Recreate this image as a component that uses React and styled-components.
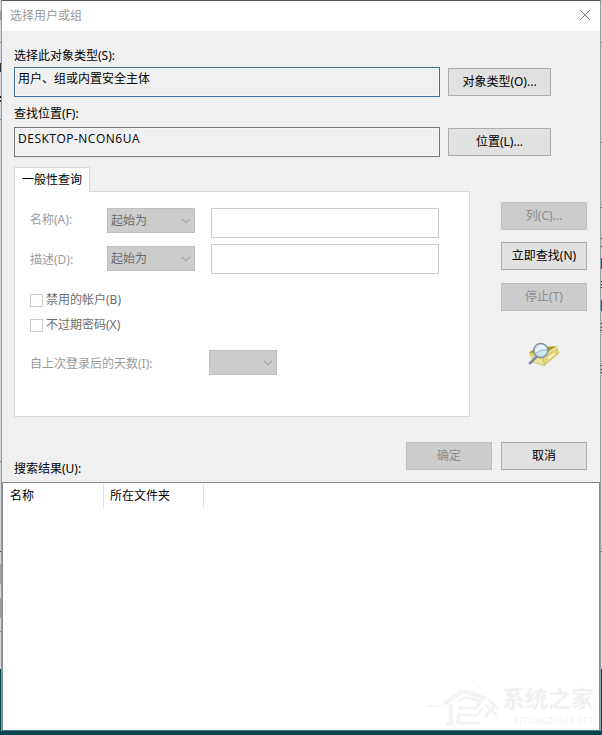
import React from 'react'
import styled, { createGlobalStyle } from 'styled-components'

const GlobalStyle = createGlobalStyle`
    * {
        box-sizing: border-box;
    }

    body {
        margin: 0;
        font-family: "Noto Sans", "Noto Sans CJK SC", sans-serif;
        font-size: 12px;
        line-height: 16px;
        color: #000;
        overflow: hidden;
    }

    button, input {
        font: inherit;
    }
`;

// bits of the window behind that stick out on either side
const leftMarks = [
    { top: 11, height: 9, color: '#999' },
    { top: 42, height: 1, color: '#888' },
    { top: 63, height: 9, color: '#333' },
    { top: 96, height: 2, color: '#111' },
    { top: 100, height: 2, color: '#333' },
    { top: 119, height: 1, color: '#888' },
    { top: 461, height: 1, color: '#777' },
    { top: 551, height: 1, color: '#444' },
    { top: 564, height: 20, color: '#a2a4a4' },
    { top: 598, height: 20, color: '#999' },
    { top: 631, height: 1, color: '#888' },
]

const rightMarks = [
    { top: 42, height: 1, color: '#777' },
    { top: 142, height: 1, color: '#777' },
    { top: 207, height: 1, color: '#555' },
    { top: 238, height: 1, color: '#111' },
    { top: 246, height: 1, color: '#111' },
    { top: 258, height: 11, color: '#1c5378' },
    { top: 281, height: 1, color: '#111' },
    { top: 284, height: 1, color: '#111' },
    { top: 287, height: 1, color: '#111' },
    { top: 300, height: 11, color: '#1c5378' },
    { top: 323, height: 1, color: '#111' },
    { top: 327, height: 1, color: '#111' },
    { top: 330, height: 1, color: '#111' },
    { top: 365, height: 1, color: '#111' },
    { top: 369, height: 1, color: '#111' },
    { top: 372, height: 1, color: '#111' },
    { top: 551, height: 1, color: '#555' },
]

function Chevron() {
    return (
        <svg width="10" height="6" viewBox="0 0 10 6" fill="none" stroke="#a0a0a0" strokeWidth="1.1">
            <path d="M1 0.8 L5 4.8 L9 0.8" />
        </svg>
    )
}

function SearchIcon() {
    return (
        <svg width="32" height="26" viewBox="0 0 32 26">
            <path d="M1 11 L8 5 L29 4 L30 8 L16 18 L3 16 Z" fill="#dccf72" />
            <path d="M1 10.500 L9 5.500 L28 4.500 L16 12 Z" fill="#a6953a" />
            <path d="M14 14.500 L29.500 4 L31 10.500 L16.500 23.500 L4 19.500 L3 14 Z" fill="#efe69a" />
            <path d="M15 15.500 L29 7 L31 11 L16.500 23.500 Z" fill="#e2d77c" stroke="#b5aa5c" strokeWidth="0.6" />
            <path d="M19.500 15.500 L26 11 L26.500 12.500 L20 17.500 Z" fill="#fbf8cf" />
            <path d="M4 15.500 L15 16.500 L16.500 23.500 L4 20" fill="#ece39a" stroke="#c0b565" strokeWidth="0.6" />
            <path d="M8 15 L2 21" stroke="#747d95" strokeWidth="2.8" strokeLinecap="round" />
            <path d="M7.500 14.500 L1.800 20.300" stroke="#b4bbcb" strokeWidth="1" strokeLinecap="round" />
            <ellipse cx="12.800" cy="8.500" rx="7" ry="7" fill="#cbe5ee" stroke="#8793a8" strokeWidth="1.5" />
            <path d="M7.500 10.500 Q12 6 18.500 7 Q17 3 12.500 3 Q7.500 5 7.500 10.500 Z" fill="#e8f7fa" />
            <path d="M7.500 11.500 Q13 7 19 8" fill="none" stroke="#9fc5b0" strokeWidth="1" />
        </svg>
    )
}

function Watermark() {
    return (
        <WatermarkStyled>
            <svg width="72" height="48" viewBox="0 0 72 48" fill="none" stroke="#f3f3f3" strokeWidth="4">
                <path d="M0 26 L12 26" strokeWidth="2" />
                <path d="M17 24 L36 11 L59 18" />
                <path d="M46 2 L59 14" strokeWidth="1" />
                <path d="M24 24 V44 H19" />
                <path d="M31 21 L39 17 L54 21 L49 28 H31 M31 35 H50 L56 28 M31 35 V43 H53" strokeWidth="3" />
                <path d="M61 19 L71 29 M58 24 L70 36 M69 24 L58 37" strokeWidth="3" />
            </svg>
            <div>
                <div className="name">系统之家</div>
                <div className="site">XITONGZHIJIA.NET</div>
            </div>
        </WatermarkStyled>
    )
}

function App() {
    return (
        <Desktop>
            <GlobalStyle />
            {leftMarks.map((mark) => <Mark key={mark.top} $side="left" style={{ top: mark.top, height: mark.height, background: mark.color }} />)}
            {rightMarks.map((mark) => <Mark key={mark.top} $side="right" style={{ top: mark.top, height: mark.height, background: mark.color }} />)}
            <Dialog>
                <TitleBar>
                    <span>选择用户或组</span>
                    <svg width="12" height="12" viewBox="0 0 12 12" stroke="#858585" strokeWidth="1">
                        <path d="M1 1 L11 11 M11 1 L1 11" />
                    </svg>
                </TitleBar>

                <Body>
                    <FieldLabel>选择此对象类型(S):</FieldLabel>
                    <FieldRow>
                        <ReadOnly $color="#3f6f98">用户、组或内置安全主体</ReadOnly>
                        <Button $width={103}>对象类型(O)...</Button>
                    </FieldRow>
                    <FieldLabel $gap={9}>查找位置(F):</FieldLabel>
                    <FieldRow>
                        <ReadOnly $color="#767676"><Latin>DESKTOP-NCON6UA</Latin></ReadOnly>
                        <Button $width={103}>位置(L)...</Button>
                    </FieldRow>

                    <Query>
                        <div>
                            <Tab>一般性查询</Tab>
                            <Panel>
                                <Criteria>
                                    <Muted>名称(A):</Muted>
                                    <Select $width={88}>起始为<Chevron /></Select>
                                    <TextInput disabled />
                                </Criteria>
                                <Criteria $offset={2}>
                                    <Muted>描述(D):</Muted>
                                    <Select $width={88}>起始为<Chevron /></Select>
                                    <TextInput disabled />
                                </Criteria>
                                <Checks>
                                    <Check><span className="box" />禁用的帐户(B)</Check>
                                    <Check><span className="box" />不过期密码(X)</Check>
                                </Checks>
                                <Days>
                                    <Muted>自上次登录后的天数(I):</Muted>
                                    <Select $width={68}><span /><Chevron /></Select>
                                </Days>
                            </Panel>
                        </div>
                        <Actions>
                            <Button $width={86} disabled>列(C)...</Button>
                            <Button $width={86}>立即查找(N)</Button>
                            <Button $width={86} disabled>停止(T)</Button>
                            <SearchIcon />
                        </Actions>
                    </Query>

                    <Footer>
                        <span>搜索结果(U):</span>
                        <Button $width={86} disabled>确定</Button>
                        <Button $width={86}>取消</Button>
                    </Footer>
                </Body>

                <Results>
                    <HeaderCell $width={101}>名称</HeaderCell>
                    <HeaderCell $width={100}>所在文件夹</HeaderCell>
                    <Watermark />
                </Results>
            </Dialog>
        </Desktop>
    )
}

const Desktop = styled.div`
    position: relative;
    width: 602px;
    height: 735px;
    padding: 0 1px 4px;
    background: linear-gradient(#d4d6d8 669px, #044552 669px);
`;

const Mark = styled.i`
    position: absolute;
    width: 1px;
    ${(props) => props.$side}: 0;
`;

const Dialog = styled.div`
    display: flex;
    flex-direction: column;
    height: 731px;
    border: 1px solid #999c9f;
    border-top-color: #4b565c;
    border-bottom-color: #52767c;
    background: #f0f0f0;
`;

const TitleBar = styled.div`
    display: flex;
    align-items: center;
    justify-content: space-between;
    height: 30px;
    padding: 0 9px 0 8px;
    background: #fff;
    color: #999;

    svg {
        margin-top: -2px;
    }
`;

const Body = styled.div`
    height: 451px;
    padding: 17px 12px 0;
`;

const FieldLabel = styled.div`
    height: 16px;
    margin-top: ${(props) => props.$gap || 0}px;
    margin-bottom: 3px;

    & ~ & {
        margin-bottom: 5px;
    }
`;

const FieldRow = styled.div`
    display: flex;
    align-items: center;
    gap: 8px;
    height: 30px;
`;

const ReadOnly = styled.div`
    width: 426px;
    height: 30px;
    padding: 3px;
    border: 1px solid ${(props) => props.$color};
    box-shadow: inset 0 0 0 1px #f7f7f7;
`;

const Latin = styled.span`
    font-family: "Open Sans", sans-serif;
    letter-spacing: 0.5px;
`;

const Button = styled.button`
    flex: none;
    width: ${(props) => props.$width}px;
    height: 28px;
    padding: 0 0 1px;
    border: 1px solid #adadad;
    background: #e1e1e1;
    color: #000;
    white-space: nowrap;

    &:disabled {
        border-color: #bfbfbf;
        background: #ccc;
        color: #8b8b8b;
    }
`;

const Query = styled.div`
    display: flex;
    gap: 31px;
    margin-top: 10px;
`;

const Tab = styled.div`
    position: relative;
    width: 76px;
    height: 25px;
    padding: 4px 7px;
    border: 1px solid #d9d9d9;
    border-bottom: none;
    background: #fff;
    white-space: nowrap;
`;

const Panel = styled.div`
    width: 456px;
    height: 226px;
    margin-top: -1px;
    padding: 16px 15px;
    border: 1px solid #d9d9d9;
    background: #fff;
`;

const Muted = styled.span`
    color: #9b9b9b;
    white-space: nowrap;
`;

const Criteria = styled.div`
    display: grid;
    grid-template-columns: 77px 88px 228px;
    align-items: start;
    height: 36px;

    & > span {
        margin-top: ${(props) => 4 + (props.$offset ? 4 : 0)}px;
    }

    & > div {
        margin-top: ${(props) => props.$offset || 0}px;
    }

    & > input {
        margin-left: 16px;
    }
`;

const Select = styled.div`
    display: flex;
    align-items: center;
    justify-content: space-between;
    width: ${(props) => props.$width}px;
    height: 25px;
    padding: 0 3px;
    border: 1px solid #bfbfbf;
    background: #ccc;
    color: #6d6d6d;
`;

const TextInput = styled.input`
    width: 228px;
    height: 30px;
    border: 1px solid #ccc;
    background: #fff;
`;

const Checks = styled.div`
    display: flex;
    flex-direction: column;
    gap: 9px;
    margin-top: 12px;
`;

const Check = styled.label`
    display: flex;
    align-items: center;
    gap: 3px;
    height: 16px;
    color: #6d6d6d;

    .box {
        width: 13px;
        height: 13px;
        border: 1px solid #ccc;
        background: #fff;
    }
`;

const Days = styled.div`
    display: flex;
    align-items: center;
    justify-content: space-between;
    width: 247px;
    margin-top: 17px;

    & > span {
        padding-top: 3px;
    }
`;

const Actions = styled.div`
    display: flex;
    flex-direction: column;
    align-items: center;
    gap: 12px;
    padding-top: 35px;

    button:nth-of-type(3) {
        margin-top: 1px;
    }

    svg {
        margin-top: 19px;
    }
`;

const Footer = styled.div`
    display: flex;
    gap: 9px;
    height: 40px;
    margin-top: 25px;
    padding-right: 1px;

    span {
        flex: 1;
        padding-top: 19px;
    }
`;

const Results = styled.div`
    position: relative;
    flex: 1;
    display: flex;
    border-top: 1px solid #828790;
    border-left: 1px solid #828790;
    border-right: 1px solid #828790;
    background: #fff;
`;

const HeaderCell = styled.div`
    width: ${(props) => props.$width}px;
    height: 24px;
    margin-top: 1px;
    padding: 4px 7px;
    border-right: 1px solid #e3e3e3;

    & + & {
        padding-left: 6px;
    }
`;

const WatermarkStyled = styled.div`
    position: absolute;
    right: 5px;
    bottom: 2px;
    display: flex;
    align-items: center;
    gap: 3px;
    color: #f1f1f1;

    .name {
        font-size: 23px;
        font-weight: 700;
        line-height: 34px;
    }

    .site {
        font-size: 8px;
        line-height: 12px;
        text-align: right;
        letter-spacing: 0.6px;
    }
`;

export default App
